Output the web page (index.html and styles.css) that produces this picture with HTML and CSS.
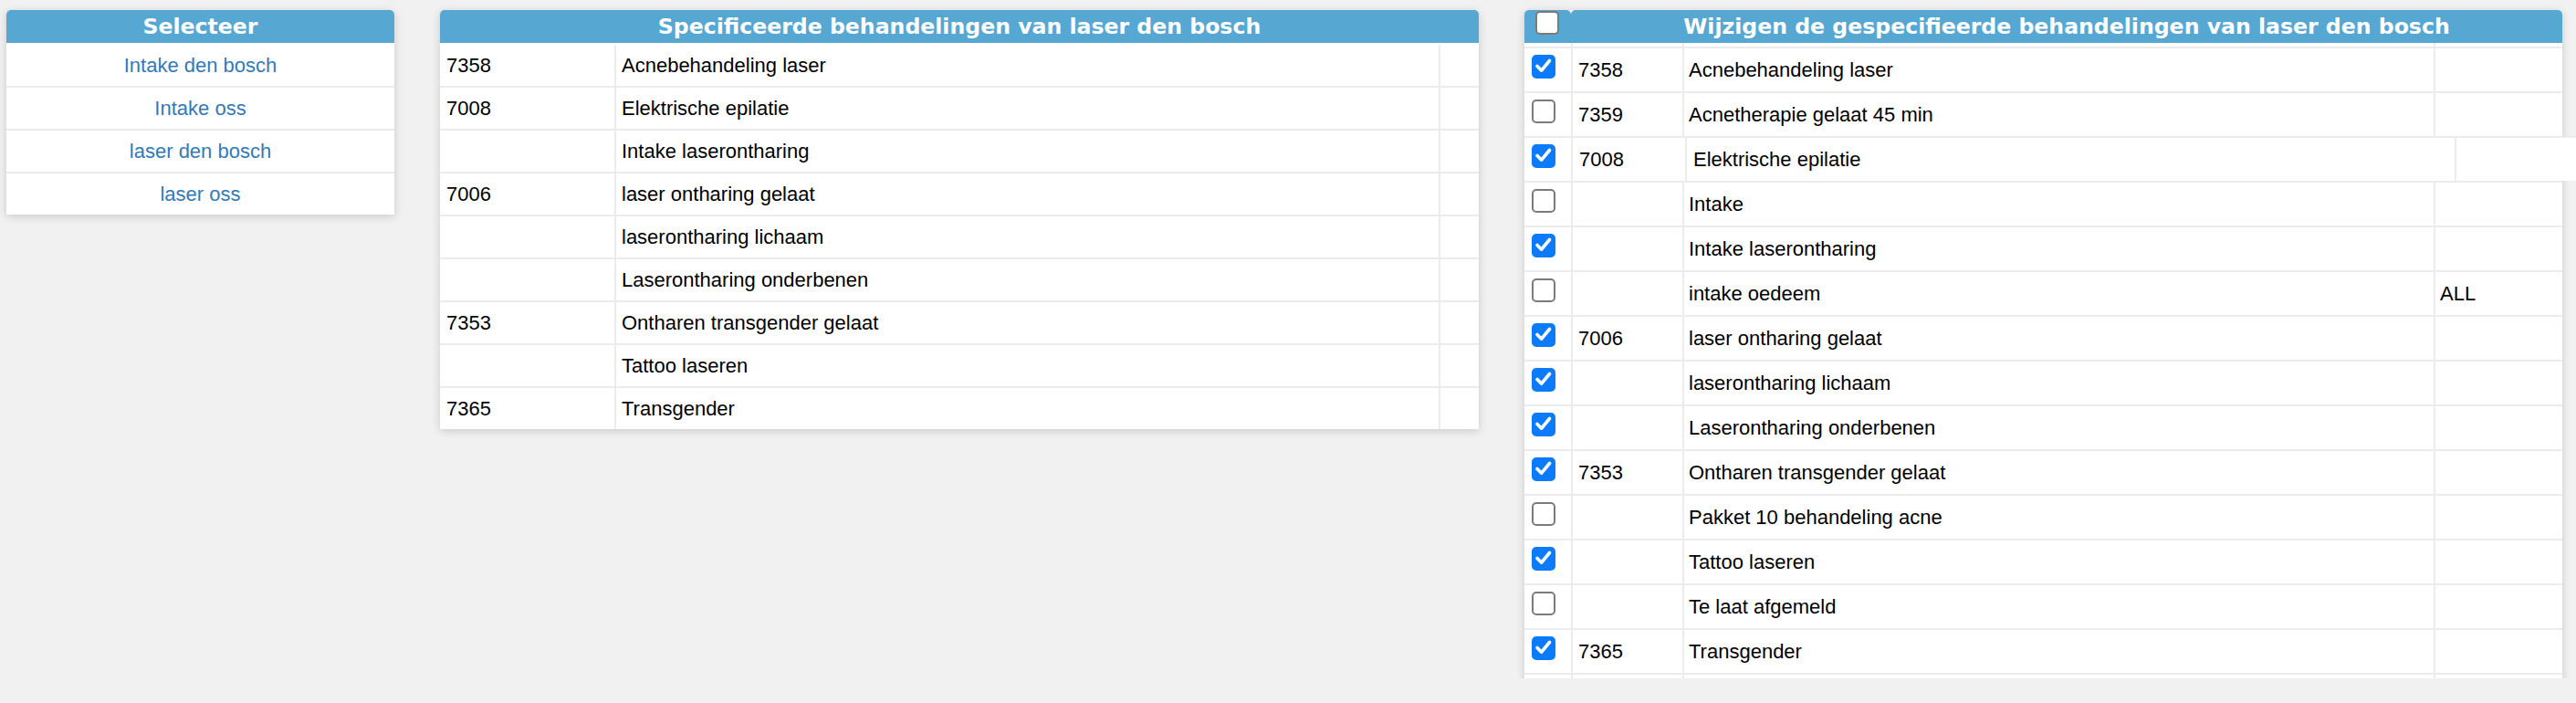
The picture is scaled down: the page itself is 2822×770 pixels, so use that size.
FILE: index.html
```html
<!DOCTYPE html>
<html lang="nl">
<head>
<meta charset="utf-8">
<title>Behandelingen</title>
<link rel="stylesheet" href="styles.css">
</head>
<body>
<div class="page">

  <section class="panel panel-select">
    <div class="panel-head">Selecteer</div>
    <ul class="link-list">
      <li class="link-row"><a href="#">Intake den bosch</a></li>
      <li class="link-row"><a href="#">Intake oss</a></li>
      <li class="link-row"><a href="#">laser den bosch</a></li>
      <li class="link-row"><a href="#">laser oss</a></li>
    </ul>
  </section>

  <section class="panel panel-spec">
    <div class="panel-head">Specificeerde behandelingen van laser den bosch</div>
    <div class="spec-body">
      <div class="spec-row"><div class="cell code">7358</div><div class="cell">Acnebehandeling laser</div><div class="cell"></div></div>
      <div class="spec-row"><div class="cell code">7008</div><div class="cell">Elektrische epilatie</div><div class="cell"></div></div>
      <div class="spec-row"><div class="cell code"></div><div class="cell">Intake laserontharing</div><div class="cell"></div></div>
      <div class="spec-row"><div class="cell code">7006</div><div class="cell">laser ontharing gelaat</div><div class="cell"></div></div>
      <div class="spec-row"><div class="cell code"></div><div class="cell">laserontharing lichaam</div><div class="cell"></div></div>
      <div class="spec-row"><div class="cell code"></div><div class="cell">Laserontharing onderbenen</div><div class="cell"></div></div>
      <div class="spec-row"><div class="cell code">7353</div><div class="cell">Ontharen transgender gelaat</div><div class="cell"></div></div>
      <div class="spec-row"><div class="cell code"></div><div class="cell">Tattoo laseren</div><div class="cell"></div></div>
      <div class="spec-row"><div class="cell code">7365</div><div class="cell">Transgender</div><div class="cell"></div></div>
    </div>
  </section>

  <section class="panel panel-edit">
    <div class="edit-head">
      <div class="head-check"><span class="cb"></span></div>
      <div class="head-title">Wijzigen de gespecifieerde behandelingen van laser den bosch</div>
    </div>
    <div class="edit-spacer"><div class="ecell"></div><div class="ecell"></div><div class="ecell"></div><div class="ecell"></div></div>

    <div class="edit-row">
      <div class="ecell check"><span class="cb is-checked"><svg viewBox="0 0 26 26"><path d="M6 12.5 L10.7 17.2 L19.5 6.5"/></svg></span></div>
      <div class="ecell">7358</div><div class="ecell">Acnebehandeling laser</div><div class="ecell"></div>
    </div>
    <div class="edit-row">
      <div class="ecell check"><span class="cb"></span></div>
      <div class="ecell">7359</div><div class="ecell">Acnetherapie gelaat 45 min</div><div class="ecell"></div>
    </div>
    <div class="edit-row edit-row-wide">
      <div class="ecell check"><span class="cb is-checked"><svg viewBox="0 0 26 26"><path d="M6 12.5 L10.7 17.2 L19.5 6.5"/></svg></span></div>
      <div class="ecell">7008</div><div class="ecell">Elektrische epilatie</div><div class="ecell"></div>
    </div>
    <div class="edit-row">
      <div class="ecell check"><span class="cb"></span></div>
      <div class="ecell"></div><div class="ecell">Intake</div><div class="ecell"></div>
    </div>
    <div class="edit-row">
      <div class="ecell check"><span class="cb is-checked"><svg viewBox="0 0 26 26"><path d="M6 12.5 L10.7 17.2 L19.5 6.5"/></svg></span></div>
      <div class="ecell"></div><div class="ecell">Intake laserontharing</div><div class="ecell"></div>
    </div>
    <div class="edit-row">
      <div class="ecell check"><span class="cb"></span></div>
      <div class="ecell"></div><div class="ecell">intake oedeem</div><div class="ecell">ALL</div>
    </div>
    <div class="edit-row">
      <div class="ecell check"><span class="cb is-checked"><svg viewBox="0 0 26 26"><path d="M6 12.5 L10.7 17.2 L19.5 6.5"/></svg></span></div>
      <div class="ecell">7006</div><div class="ecell">laser ontharing gelaat</div><div class="ecell"></div>
    </div>
    <div class="edit-row">
      <div class="ecell check"><span class="cb is-checked"><svg viewBox="0 0 26 26"><path d="M6 12.5 L10.7 17.2 L19.5 6.5"/></svg></span></div>
      <div class="ecell"></div><div class="ecell">laserontharing lichaam</div><div class="ecell"></div>
    </div>
    <div class="edit-row">
      <div class="ecell check"><span class="cb is-checked"><svg viewBox="0 0 26 26"><path d="M6 12.5 L10.7 17.2 L19.5 6.5"/></svg></span></div>
      <div class="ecell"></div><div class="ecell">Laserontharing onderbenen</div><div class="ecell"></div>
    </div>
    <div class="edit-row">
      <div class="ecell check"><span class="cb is-checked"><svg viewBox="0 0 26 26"><path d="M6 12.5 L10.7 17.2 L19.5 6.5"/></svg></span></div>
      <div class="ecell">7353</div><div class="ecell">Ontharen transgender gelaat</div><div class="ecell"></div>
    </div>
    <div class="edit-row">
      <div class="ecell check"><span class="cb"></span></div>
      <div class="ecell"></div><div class="ecell">Pakket 10 behandeling acne</div><div class="ecell"></div>
    </div>
    <div class="edit-row">
      <div class="ecell check"><span class="cb is-checked"><svg viewBox="0 0 26 26"><path d="M6 12.5 L10.7 17.2 L19.5 6.5"/></svg></span></div>
      <div class="ecell"></div><div class="ecell">Tattoo laseren</div><div class="ecell"></div>
    </div>
    <div class="edit-row">
      <div class="ecell check"><span class="cb"></span></div>
      <div class="ecell"></div><div class="ecell">Te laat afgemeld</div><div class="ecell"></div>
    </div>
    <div class="edit-row">
      <div class="ecell check"><span class="cb is-checked"><svg viewBox="0 0 26 26"><path d="M6 12.5 L10.7 17.2 L19.5 6.5"/></svg></span></div>
      <div class="ecell">7365</div><div class="ecell">Transgender</div><div class="ecell"></div>
    </div>
    <div class="edit-row">
      <div class="ecell check"></div>
      <div class="ecell"></div><div class="ecell"></div><div class="ecell"></div>
    </div>
  </section>

</div>
</body>
</html>
```

FILE: styles.css
```css
html, body {
  margin: 0;
  padding: 0;
  background: #f1f1f1;
}

.page {
  box-sizing: border-box;
  height: 743px;
  overflow: hidden;
  padding: 11px 0 0 7px;
  display: flex;
  align-items: flex-start;
  gap: 50px;
  font-family: "Liberation Sans", Arial, sans-serif;
  font-size: 22px;
  color: #000;
}

.panel {
  flex: none;
  background: #fff;
  border-radius: 5px 5px 0 0;
  box-shadow: 0 2px 10px rgba(0, 0, 0, 0.17);
}

.panel-select { width: 425px; }
.panel-spec { width: 1138px; }
.panel-edit { width: 1137px; }

.panel-head,
.head-title {
  height: 36px;
  line-height: 37px;
  background: #57a7d3;
  color: #fff;
  font-family: "DejaVu Sans", Verdana, sans-serif;
  font-weight: bold;
  font-size: 23.6px;
  text-align: center;
  white-space: nowrap;
  border-radius: 5px 5px 0 0;
}

/* Selecteer */
.link-list {
  list-style: none;
  margin: 0;
  padding: 0;
}

.link-row {
  box-sizing: border-box;
  height: 47px;
  border-top: 2px solid #ececec;
  display: flex;
  align-items: center;
  justify-content: center;
}

.link-row:first-child { border-top-color: #fff; }

.link-row a {
  color: #337ab7;
  text-decoration: none;
}

/* Specificeerde */
.spec-row {
  box-sizing: border-box;
  height: 47px;
  border-top: 2px solid #ececec;
  display: grid;
  grid-template-columns: 191px 903px 44px;
}

.spec-row:first-child { border-top-color: #fff; }

.cell {
  box-sizing: border-box;
  display: flex;
  align-items: center;
  padding-left: 6px;
  white-space: nowrap;
}

.cell + .cell { border-left: 2px solid #ececec; }
.cell.code { padding-left: 7px; }

/* Wijzigen */
.edit-head {
  display: flex;
  height: 36px;
}

.head-check {
  box-sizing: border-box;
  width: 51px;
  flex: none;
  padding: 1px 0 0 12px;
  background: #57a7d3;
  border-radius: 5px 5px 0 0;
}

.head-title { flex: 1; }

.edit-spacer,
.edit-row {
  display: grid;
  grid-template-columns: 51px 122px 823px 141px;
  background: #fff;
}

.edit-spacer { height: 4px; }

.edit-row {
  box-sizing: border-box;
  height: 49px;
  border-top: 2px solid #ececec;
}

.edit-row-wide {
  width: 1179px;
  grid-template-columns: 51px 125px 843px 160px;
}

.edit-row-wide .ecell + .ecell { padding-left: 7px; }

.ecell {
  box-sizing: border-box;
  display: flex;
  align-items: center;
  padding-left: 5px;
  white-space: nowrap;
}

.ecell + .ecell { border-left: 2px solid #ececec; }
.ecell:nth-child(2) { padding-left: 6px; }

.ecell.check {
  align-items: flex-start;
  padding: 7px 0 0 8px;
}

.cb {
  display: block;
  box-sizing: border-box;
  width: 26px;
  height: 26px;
  border: 2px solid #7b7b7b;
  border-radius: 5px;
  background: #fff;
}

.cb.is-checked {
  border-color: #0b7bfb;
  background: #0b7bfb;
}

.cb svg {
  display: block;
  width: 26px;
  height: 26px;
  margin: -2px;
}

.cb svg path {
  fill: none;
  stroke: #fff;
  stroke-width: 3.6;
  stroke-linecap: round;
  stroke-linejoin: round;
}
```
